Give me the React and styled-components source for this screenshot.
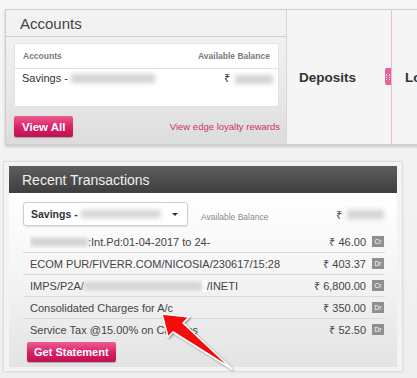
import React from 'react';
import styled, { createGlobalStyle } from 'styled-components';

const transactions = [
  { id: 1, text: ':Int.Pd:01-04-2017 to 24-', amount: '46.00', type: 'Cr' },
  { id: 2, text: 'ECOM PUR/FIVERR.COM/NICOSIA/230617/15:28', amount: '403.37', type: 'Dr' },
  { id: 3, text: 'IMPS/P2A/', tail: '/INETI', amount: '6,800.00', type: 'Cr' },
  { id: 4, text: 'Consolidated Charges for A/c', amount: '350.00', type: 'Dr' },
  { id: 5, text: 'Service Tax @15.00% on Charges', amount: '52.50', type: 'Dr' },
];

const GlobalStyle = createGlobalStyle`
  body {
    margin: 0;
    background: #efefef;
    font-family: 'Liberation Sans', Arial, sans-serif;
    overflow: hidden;
  }
`;

const Page = styled.div`
  position: relative;
  width: 417px;
  height: 378px;
  overflow: hidden;
  background: linear-gradient(180deg, #f6f6f6 0%, #eeeeee 100%);
`;

const TopCard = styled.div`
  display: flex;
  margin: 9px 0 0 5px;
  width: 440px;
  height: 134px;
  border: 1px solid #cfcfcf;
  border-right: none;
  box-shadow: 0 2px 3px rgba(0, 0, 0, 0.18);
  background: #f6f6f6;
`;

const AccountsPane = styled.div`
  flex-shrink: 0;
  display: flex;
  flex-direction: column;
  width: 280px;
  background: linear-gradient(180deg, #f5f5f5 0%, #e9e9e9 60%, #dcdcdc 100%);
  border-right: 1px solid #d6d6d6;
`;

const PaneTitle = styled.div`
  height: 26px;
  padding-left: 14px;
  display: flex;
  align-items: center;
  font-size: 15px;
  color: #454545;
  border-bottom: 1px solid #cfcfcf;
  background: #f2f2f2;
`;

const AccountsTable = styled.div`
  margin: 6px 7px 0 8px;
  height: 62px;
  background: #fff;
  border: 1px solid #e2e2e2;
  border-radius: 2px;
`;

const TableHead = styled.div`
  display: flex;
  justify-content: space-between;
  align-items: center;
  height: 24px;
  padding: 0 8px;
  border-bottom: 1px solid #e2e2e2;
  font-size: 8.5px;
  font-weight: bold;
  color: #7a7a7a;
`;

const TableRow = styled.div`
  display: flex;
  justify-content: space-between;
  align-items: center;
  height: 17px;
  padding: 0 5px 0 7px;
  font-size: 11px;
  color: #333;
`;

const Blur = styled.span`
  display: inline-block;
  width: ${(p) => p.w}px;
  height: ${(p) => p.h || 9}px;
  margin-left: ${(p) => p.ml || 0}px;
  background: ${(p) => p.bg || '#c9c9c9'};
  filter: blur(2.5px);
  vertical-align: middle;
  flex-shrink: 0;
`;

const WhitePatch = styled.span`
  display: inline-block;
  width: 5px;
  height: 12px;
  background: #fff;
  flex-shrink: 0;
`;

const PaneFooter = styled.div`
  display: flex;
  justify-content: space-between;
  align-items: center;
  margin: auto 6px 7px 8px;
`;

const PinkButton = styled.button`
  height: ${(p) => p.h || 21}px;
  padding: 0 ${(p) => p.px || 8}px;
  border: none;
  border-radius: 2px;
  background: linear-gradient(180deg, #ee5b92 0%, #d71f66 55%, #c0114f 100%);
  box-shadow: 0 1px 1px rgba(0, 0, 0, 0.25);
  color: #fff;
  font-family: 'Liberation Sans', Arial, sans-serif;
  font-size: 11.5px;
  font-weight: bold;
`;

const LoyaltyLink = styled.span`
  font-size: 9.5px;
  color: #c9356a;
`;

const SideTab = styled.div`
  flex-shrink: 0;
  position: relative;
  display: flex;
  align-items: center;
  width: ${(p) => p.w}px;
  padding-left: ${(p) => p.pl}px;
  background: #f5f5f5;
  border-right: 1px solid ${(p) => p.edge || '#dddddd'};
  font-size: 13.5px;
  font-weight: bold;
  color: #333;
  box-sizing: border-box;
`;

const Grip = styled.div`
  position: absolute;
  right: 0;
  top: 58px;
  width: 6px;
  height: 17px;
  background: #e2659a;
  border-radius: 2px 0 0 2px;
  display: flex;
  align-items: center;
  justify-content: center;
  &::after {
    content: '';
    width: 1px;
    height: 6px;
    border-left: 1px dotted #fbd3e3;
    border-right: 1px dotted #fbd3e3;
    padding: 0 0.5px;
  }
`;

const RecentCard = styled.div`
  margin: 16px 0 0 3px;
  width: 388px;
  height: 201px;
  padding: 4px 5px;
  background: #f3f3f3;
  border: 1px solid #dedede;
  box-shadow: 0 0 2px rgba(0, 0, 0, 0.08);
`;

const DarkHeader = styled.div`
  height: 27px;
  padding-left: 13px;
  display: flex;
  align-items: center;
  background: linear-gradient(180deg, #5e5e5e 0%, #3e3e3e 100%);
  font-size: 14px;
  color: #f0f0f0;
`;

const RecentBody = styled.div`
  height: 174px;
  padding: 9px 12px 0 14px;
  background: linear-gradient(180deg, #ffffff 0%, #f4f4f4 50%, #e3e3e3 100%);
  box-sizing: border-box;
`;

const SelectRow = styled.div`
  display: flex;
  align-items: center;
  height: 24px;
`;

const SelectBox = styled.div`
  display: flex;
  align-items: center;
  width: 165px;
  height: 24px;
  padding: 0 9px 0 7px;
  box-sizing: border-box;
  background: #fff;
  border: 1px solid #cfcfcf;
  border-radius: 3px;
  box-shadow: 0 1px 2px rgba(0, 0, 0, 0.12);
  font-size: 10.5px;
  font-weight: bold;
  color: #333;
`;

const Caret = styled.span`
  margin-left: auto;
  width: 0;
  height: 0;
  border-left: 3px solid transparent;
  border-right: 3px solid transparent;
  border-top: 3px solid #333;
`;

const SmallLabel = styled.span`
  margin: 5px 0 0 13px;
  font-size: 8.5px;
  color: #8a8a8a;
`;

const Balance = styled.span`
  margin: 0 0 0 auto;
  padding-right: 1px;
  display: flex;
  align-items: center;
  font-size: 11px;
  color: #444;
`;

const TxList = styled.div`
  margin-top: 5px;
`;

const TxRow = styled.div`
  display: flex;
  align-items: center;
  height: 21px;
  padding: 0 1px 0 7px;
  border-bottom: 1px solid ${(p) => (p.last ? 'transparent' : '#dadada')};
  font-size: 11px;
  color: #444;
  white-space: nowrap;
`;

const TxText = styled.span`
  flex: 1;
  overflow: hidden;
  display: flex;
  align-items: center;
`;

const Amount = styled.span`
  margin-left: 6px;
  font-size: 11px;
  color: #444;
`;

const Badge = styled.span`
  margin-left: 6px;
  width: 12px;
  height: 11px;
  background: #8f8f8f;
  color: #fff;
  font-size: 6.5px;
  display: flex;
  align-items: center;
  justify-content: center;
`;

const StatementButton = styled(PinkButton)`
  margin: 1px 0 0 4px;
  font-size: 11px;
`;

const Arrow = styled.svg`
  position: absolute;
  left: 155px;
  top: 306px;
  overflow: visible;
`;

const App = () => {
  return (
    <Page>
      <GlobalStyle />
      <TopCard>
        <AccountsPane>
          <PaneTitle>Accounts</PaneTitle>
          <AccountsTable>
            <TableHead>
              <span>Accounts</span>
              <span>Available Balance</span>
            </TableHead>
            <TableRow>
              <span>
                Savings - <Blur w={84} bg="#d2d2d2" />
              </span>
              <span>
                ₹ <Blur w={38} ml={2} bg="#d2d2d2" />
              </span>
            </TableRow>
          </AccountsTable>
          <PaneFooter>
            <PinkButton>View All</PinkButton>
            <LoyaltyLink>View edge loyalty rewards</LoyaltyLink>
          </PaneFooter>
        </AccountsPane>
        <SideTab w={105} pl={12} edge="#f1b9cf">
          Deposits
          <Grip />
        </SideTab>
        <SideTab w={60} pl={13}>
          Loans
        </SideTab>
      </TopCard>

      <RecentCard>
        <DarkHeader>Recent Transactions</DarkHeader>
        <RecentBody>
          <SelectRow>
            <SelectBox>
              Savings - <Blur w={80} h={8} ml={3} bg="#d4d4d4" />
              <Caret />
            </SelectBox>
            <SmallLabel>Available Balance</SmallLabel>
            <Balance>
              ₹ <Blur w={37} ml={5} bg="#d2d2d2" />
            </Balance>
          </SelectRow>
          <TxList>
            {transactions.map((tx, i) => (
              <TxRow key={tx.id} last={i === transactions.length - 1}>
                <TxText>
                  {tx.id === 1 && <Blur w={58} h={8} bg="#cfcfcf" />}
                  {tx.text}
                  {tx.id === 3 && (
                    <>
                      <Blur w={118} h={8} bg="#d2d2d2" />
                      <WhitePatch />
                      {tx.tail}
                    </>
                  )}
                </TxText>
                <Amount>₹ {tx.amount}</Amount>
                <Badge>{tx.type}</Badge>
              </TxRow>
            ))}
          </TxList>
          <StatementButton h={20} px={7}>
            Get Statement
          </StatementButton>
        </RecentBody>
      </RecentCard>

      <Arrow width="80" height="66" viewBox="0 0 80 66">
        <defs>
          <filter id="shadow" x="-20%" y="-20%" width="140%" height="140%">
            <feDropShadow dx="1" dy="1" stdDeviation="1" floodOpacity="0.45" />
          </filter>
        </defs>
        <path
          d="M7 8 L34 11 L28 17 L77 63 L18 26 L13 31 Z"
          fill="#f20d0d"
          stroke="#ffffff"
          strokeWidth="1.5"
          strokeLinejoin="round"
          filter="url(#shadow)"
        />
      </Arrow>
    </Page>
  );
};

export default App;
